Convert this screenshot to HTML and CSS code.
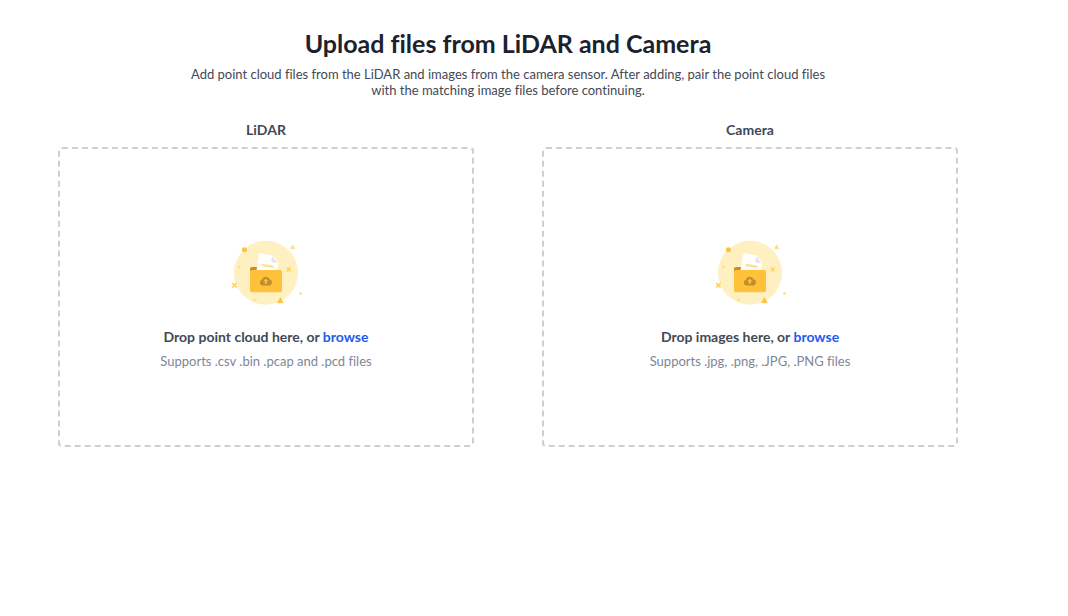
FILE: index.html
```html
<!DOCTYPE html>
<html lang="en">
<head>
<meta charset="utf-8">
<title>Upload files from LiDAR and Camera</title>
<link rel="stylesheet" href="styles.css">
</head>
<body>
<svg class="sprite" aria-hidden="true">
  <symbol id="upload-folder" viewBox="0 0 72 66">
    <circle cx="36" cy="32.8" r="32" fill="#fff0c2"/>
    <circle cx="14.4" cy="9.8" r="2.5" fill="#ffc03a"/>
    <g fill="#ffdd80">
      <path d="M62.7 4.8 65 8.8H60.4Z" stroke="#ffdd80" stroke-width=".5"/>
      <circle cx="9.3" cy="27" r="1.3"/>
      <circle cx="24.3" cy="59.8" r="1.3"/>
      <circle cx="70.6" cy="53.4" r="1.3"/>
    </g>
    <path d="M50.4 57.6 53.2 62.8H47.6Z" fill="#ffc03a" stroke="#ffc03a" stroke-width=".6"/>
    <path d="M56.8 27.5 60.6 31.3M60.6 27.5 56.8 31.3M2.2 43.2 6.8 47.6M6.8 43.2 2.2 47.6" fill="none" stroke="#ffd467" stroke-width="1.7"/>
    <path d="M20 34V29Q20 27 22 27H27.4L26 34Z" fill="#bf8f2c"/>
    <path d="M30.8 13 42.4 15.6 48.4 22.5 47 32H26.3L29 14.2Q29.4 12.8 30.8 13Z" fill="#fff"/>
    <path d="M42.4 16.4 41.2 20.8Q41 22.2 42.4 22.5L47.6 23Z" fill="#e4e6ef"/>
    <path d="M31.6 24.8 43.4 26.8" fill="none" stroke="#ffdf8c" stroke-width="2.2"/>
    <rect x="20" y="30" width="32" height="22.2" rx="2" fill="#ffc03a"/>
    <path d="M32.4 45.4A2.9 2.9 0 0 1 32 39.7 4 4 0 0 1 39.6 39.3 3.1 3.1 0 0 1 39.2 45.4Z" fill="#bf8f2c"/>
    <path d="M35.8 38.6 38.4 41.5H36.7V44H34.9V41.5H33.2Z" fill="#ffc03a"/>
  </symbol>
</svg>
<main class="page">
  <header class="intro">
    <h1 class="title">Upload files from LiDAR and Camera</h1>
    <p class="lead">Add point cloud files from the LiDAR and images from the camera sensor. After adding, pair the point cloud files with the matching image files before continuing.</p>
  </header>
  <div class="sources">
    <section class="source">
      <h2 class="label">LiDAR</h2>
      <div class="dropzone">
        <svg class="art" aria-hidden="true"><use href="#upload-folder"/></svg>
        <p class="prompt">Drop point cloud here, or <button class="browse" type="button">browse</button></p>
        <p class="hint">Supports .csv .bin .pcap and .pcd files</p>
      </div>
    </section>
    <section class="source">
      <h2 class="label">Camera</h2>
      <div class="dropzone">
        <svg class="art" aria-hidden="true"><use href="#upload-folder"/></svg>
        <p class="prompt">Drop images here, or <button class="browse" type="button">browse</button></p>
        <p class="hint">Supports .jpg, .png, .JPG, .PNG files</p>
      </div>
    </section>
  </div>
</main>
</body>
</html>
```
FILE: styles.css
```css
* {
  box-sizing: border-box;
}

body {
  margin: 0;
  background: #fff;
  color: #434956;
  font-family: Lato, "Open Sans", sans-serif;
  font-size: 13px;
  font-variant-ligatures: none;
  line-height: 16px;
}

h1, h2, p {
  margin: 0;
}

.sprite {
  display: none;
}

.page {
  padding: 28px 110px 28px 58px;
}

.intro {
  text-align: center;
}

.title {
  color: #1b222d;
  font-size: 25px;
  font-weight: 700;
  line-height: 30px;
}

.lead {
  max-width: 660px;
  margin: 8px auto 0;
}

.sources {
  display: grid;
  grid-template-columns: 1fr 1fr;
  gap: 68px;
  margin-top: 24px;
}

.label {
  margin-bottom: 9px;
  font-size: 14px;
  font-weight: 700;
  text-align: center;
}

.dropzone {
  display: flex;
  flex-direction: column;
  align-items: center;
  justify-content: center;
  min-height: 300px;
  padding: 31px 16px 16px;
  border: 2px dashed #cccfda;
  border-radius: 4px;
  text-align: center;
}

.art {
  width: 72px;
  height: 66px;
  margin-bottom: 23px;
}

.prompt {
  font-size: 14px;
  font-weight: 700;
}

.browse {
  padding: 0;
  border: 0;
  background: none;
  color: #1f5af0;
  font: inherit;
  cursor: pointer;
}

.hint {
  margin-top: 8px;
  color: #7e8699;
}
```
